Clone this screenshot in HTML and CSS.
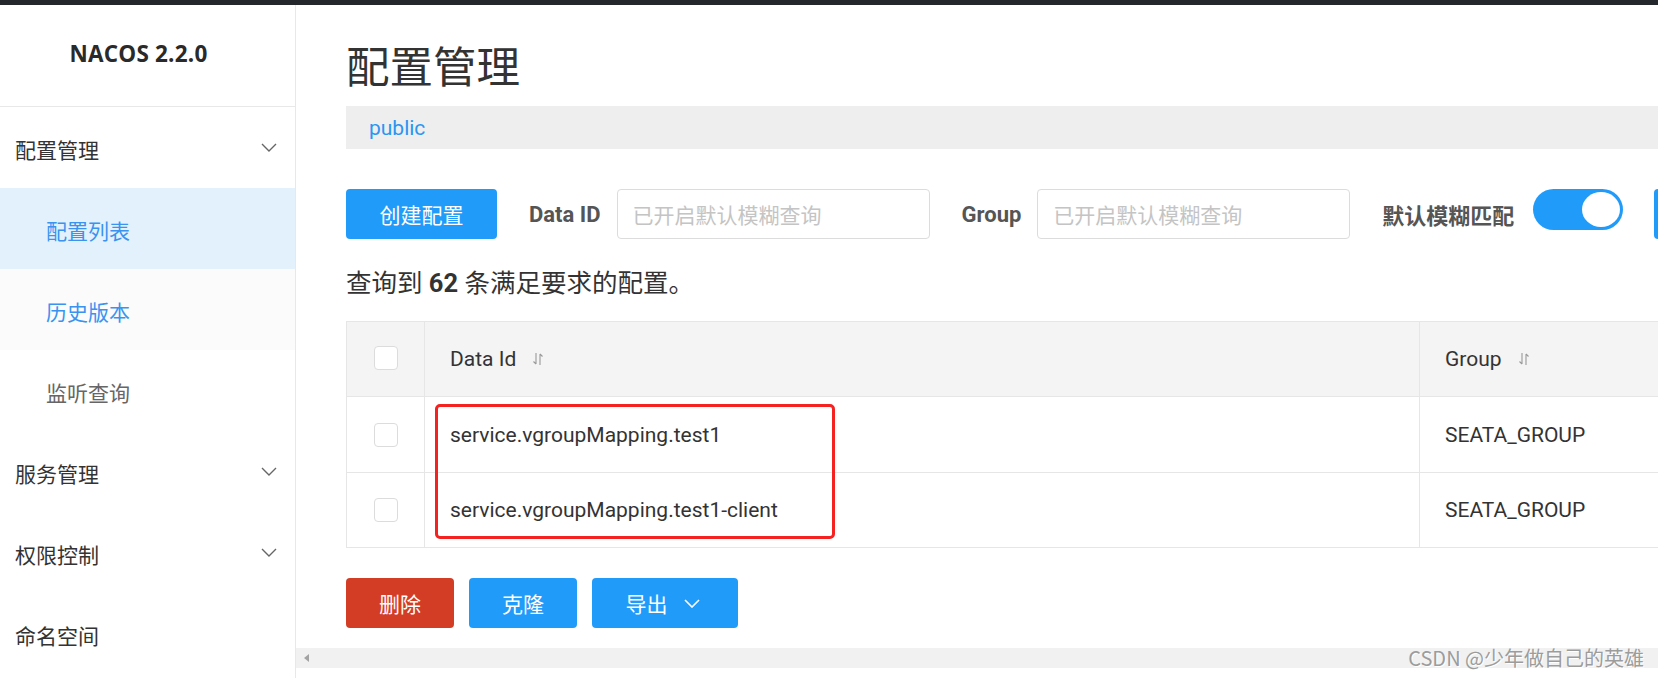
FILE: index.html
```html
<!DOCTYPE html>
<html lang="zh-CN">
<head>
<meta charset="utf-8">
<title>Nacos 配置管理</title>
<link rel="stylesheet" href="styles.css">
</head>
<body>
<div class="topbar"></div>
<div class="layout">
  <aside class="sidebar">
    <div class="logo">NACOS 2.2.0</div>
    <ul class="menu">
      <li class="menu-item parent"><span>配置管理</span><svg class="chev" width="16" height="9" viewBox="0 0 16 9"><polyline points="1,1 8,8 15,1" fill="none" stroke="#666" stroke-width="1.4"/></svg></li>
      <li class="menu-item sub active"><span>配置列表</span></li>
      <li class="menu-item sub hover"><span>历史版本</span></li>
      <li class="menu-item sub"><span>监听查询</span></li>
      <li class="menu-item parent"><span>服务管理</span><svg class="chev" width="16" height="9" viewBox="0 0 16 9"><polyline points="1,1 8,8 15,1" fill="none" stroke="#666" stroke-width="1.4"/></svg></li>
      <li class="menu-item parent"><span>权限控制</span><svg class="chev" width="16" height="9" viewBox="0 0 16 9"><polyline points="1,1 8,8 15,1" fill="none" stroke="#666" stroke-width="1.4"/></svg></li>
      <li class="menu-item parent"><span>命名空间</span></li>
    </ul>
  </aside>
  <main class="main">
    <div class="main-scroll">
      <div class="content">
        <h1 class="title">配置管理</h1>
        <div class="namespace"><span class="ns-link">public</span></div>
        <div class="toolbar">
          <button class="btn btn-primary btn-create">创建配置</button>
          <label class="field-label">Data ID</label>
          <div class="input"><span class="placeholder">已开启默认模糊查询</span></div>
          <label class="field-label">Group</label>
          <div class="input"><span class="placeholder">已开启默认模糊查询</span></div>
          <label class="field-label cjk-label">默认模糊匹配</label>
          <div class="switch"><span class="knob"></span></div>
          <span class="btn btn-primary btn-search"></span>
        </div>
        <div class="count">查询到 <b>62</b> 条满足要求的配置。</div>
        <div class="table">
          <div class="row head">
            <div class="cell c-check"><span class="checkbox"></span></div>
            <div class="cell c-id">Data Id <svg class="sort" width="12" height="14" viewBox="0 0 12 14"><path d="M4 1v11M1.5 9.5L4 12M8 13V2M8 2l2.5 2.5" fill="none" stroke="#999" stroke-width="1.1"/></svg></div>
            <div class="cell c-group">Group <svg class="sort" width="12" height="14" viewBox="0 0 12 14"><path d="M4 1v11M1.5 9.5L4 12M8 13V2M8 2l2.5 2.5" fill="none" stroke="#999" stroke-width="1.1"/></svg></div>
          </div>
          <div class="row r1">
            <div class="cell c-check"><span class="checkbox"></span></div>
            <div class="cell c-id">service.vgroupMapping.test1</div>
            <div class="cell c-group">SEATA_GROUP</div>
          </div>
          <div class="row r2">
            <div class="cell c-check"><span class="checkbox"></span></div>
            <div class="cell c-id">service.vgroupMapping.test1-client</div>
            <div class="cell c-group">SEATA_GROUP</div>
          </div>
          <div class="highlight"></div>
        </div>
        <div class="actions">
          <button class="btn btn-danger btn-act">删除</button>
          <button class="btn btn-primary btn-act">克隆</button>
          <button class="btn btn-primary btn-export">导出<svg width="16" height="9" viewBox="0 0 16 9"><polyline points="1,1 8,8 15,1" fill="none" stroke="#fff" stroke-width="1.6"/></svg></button>
        </div>
      </div>
    </div>
    <div class="hscroll">
      <span class="arrow"></span>
      <span class="watermark">CSDN @少年做自己的英雄</span>
    </div>
  </main>
</div>
</body>
</html>
```
FILE: styles.css
```css
* { box-sizing: border-box; }
html, body { margin: 0; padding: 0; }
body {
  width: 1658px;
  height: 678px;
  overflow: hidden;
  background: #fff;
  font-family: Roboto, "Noto Sans CJK SC", sans-serif;
  color: #333;
}
.topbar { height: 5px; background: #24282c; }
.layout { display: flex; height: 673px; }

.sidebar {
  width: 296px;
  flex: 0 0 296px;
  border-right: 1px solid #e8e8e8;
  background: #fff;
}
.logo {
  height: 102px;
  border-bottom: 1px solid #e8e8e8;
  display: flex;
  align-items: center;
  justify-content: center;
  padding-bottom: 4px;
  font-family: "Open Sans", "Noto Sans", sans-serif;
  font-weight: 700;
  font-size: 22.5px;
  color: #2a2a2a;
  letter-spacing: 0.2px;
  padding-right: 18px;
}
.menu { list-style: none; margin: 0; padding: 0; }
.menu-item {
  height: 81px;
  display: flex;
  align-items: center;
  justify-content: space-between;
  font-family: "Noto Sans CJK SC", sans-serif;
  font-size: 21px;
  padding: 3px 18px 0 15px;
}
.menu-item.parent { color: #333; }
.menu-item.sub { padding-left: 46px; color: #666; }
.menu-item.active { background: #e3f1fc; color: #3a93ef; }
.menu-item.hover { background: #fbfbfb; color: #3a93ef; }
.chev { display: block; margin-top: -4px; }

.main {
  flex: 1;
  min-width: 0;
  display: flex;
  flex-direction: column;
}
.main-scroll { height: 643px; overflow: hidden; }
.content { width: 1700px; padding: 30px 0 0 50px; }

.title {
  margin: 0;
  height: 60px;
  line-height: 60px;
  font-family: "Noto Sans CJK SC", sans-serif;
  font-size: 43.5px;
  font-weight: 400;
  color: #333;
}
.namespace {
  margin-top: 11px;
  height: 43px;
  background: #eee;
  padding-left: 23px;
  display: flex;
  align-items: center;
}
.ns-link { font-size: 21px; color: #2b95f2; }

.toolbar {
  margin-top: 40px;
  height: 50px;
  display: flex;
  align-items: center;
}
.btn {
  border: 0;
  border-radius: 4px;
  height: 50px;
  font-family: "Noto Sans CJK SC", sans-serif;
  font-size: 21px;
  color: #fff;
  padding: 0;
  display: flex;
  align-items: center;
  justify-content: center;
}
.btn-primary { background: #219bfa; }
.btn-danger { background: #d33d25; }
.btn-create { width: 151px; }
.btn-search { width: 100px; margin-left: 31px; flex: 0 0 100px; }
.field-label {
  font-weight: 700;
  font-size: 22px;
  color: #555;
  margin: 0 16px 0 32px;
}
.cjk-label { font-family: "Noto Sans CJK SC", sans-serif; font-size: 22px; margin-right: 19px; white-space: nowrap; }
.input {
  width: 313px;
  flex: 0 0 313px;
  height: 50px;
  border: 1px solid #dcdcdc;
  border-radius: 4px;
  padding-left: 15px;
  display: flex;
  align-items: center;
}
.placeholder { font-family: "Noto Sans CJK SC", sans-serif; font-size: 21px; color: #c4c4c4; }
.switch {
  width: 90px;
  flex: 0 0 90px;
  height: 41px;
  border-radius: 21px;
  background: #219bfa;
  position: relative;
  margin-bottom: 9px;
}
.switch .knob {
  position: absolute;
  right: 3px;
  top: 3px;
  width: 38px;
  height: 35px;
  border-radius: 50%;
  background: #fff;
}

.count {
  margin-top: 29px;
  height: 30px;
  line-height: 30px;
  font-family: Roboto, "Noto Sans CJK SC", sans-serif;
  font-size: 25.5px;
  color: #333;
}
.count b { font-weight: 700; }

.table {
  margin-top: 23px;
  position: relative;
  border-top: 1px solid #e6e6e6;
  border-left: 1px solid #e6e6e6;
}
.row {
  display: grid;
  grid-template-columns: 78px 995px 400px;
  border-bottom: 1px solid #e6e6e6;
}
.row.head { height: 75px; background: #f4f4f4; }
.row.r1 { height: 76px; }
.row.r2 { height: 75px; }
.cell {
  display: flex;
  align-items: center;
  font-size: 21px;
  color: #333;
  padding-left: 25px;
}
.c-check { justify-content: center; padding-left: 0; border-right: 1px solid #e6e6e6; }
.c-id { border-right: 1px solid #e6e6e6; }
.head .c-check { padding-bottom: 3px; }
.checkbox {
  width: 24px;
  height: 24px;
  border: 1px solid #dcdcdc;
  border-radius: 4px;
  background: #fff;
}
.sort { margin-left: 16px; }
.highlight {
  position: absolute;
  left: 88px;
  top: 82px;
  width: 400px;
  height: 135px;
  border: 3px solid #f52222;
  border-radius: 5px;
}

.actions {
  margin-top: 30px;
  display: flex;
  gap: 15px;
}
.btn-act { width: 108px; }
.btn-export { width: 146px; padding: 0 5px 0 0; gap: 16px; }
.btn-export svg { display: block; }

.hscroll {
  height: 20px;
  background: #f1f1f1;
  display: flex;
  align-items: center;
  justify-content: space-between;
  padding: 0 14px 0 8px;
}
.arrow {
  width: 0;
  height: 0;
  border-top: 4px solid transparent;
  border-bottom: 4px solid transparent;
  border-right: 5px solid #a3a3a3;
}
.watermark {
  font-family: "Noto Sans CJK SC", sans-serif;
  font-size: 20px;
  line-height: 20px;
  color: #9c9c9c;
  text-shadow: 1px 1px 0 #fff;
}
```
